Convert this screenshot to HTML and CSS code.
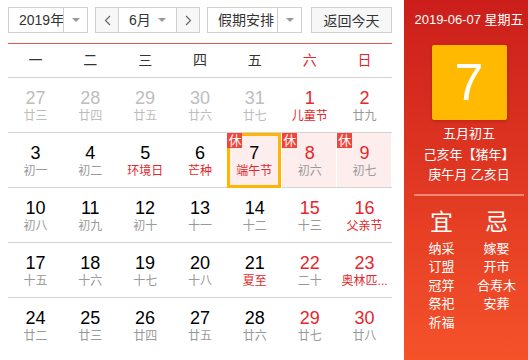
FILE: index.html
```html
<!DOCTYPE html>
<html lang="zh-CN">
<head>
<meta charset="UTF-8">
<meta name="viewport" content="width=device-width, initial-scale=1.0">
<title>万年历</title>
<link rel="stylesheet" href="styles.css">
</head>
<body>

<div class="calendar">
  <div class="main">
    <div class="toolbar">
      <div class="select year">
        <span class="select-text">2019年</span>
        <span class="select-arrow"><i class="caret"></i></span>
      </div>
      <div class="select month">
        <span class="btn-arrow">
          <svg width="7" height="11" viewBox="0 0 7 11"><path d="M6 1L1.5 5.5L6 10" fill="none" stroke="#666" stroke-width="1.2"/></svg>
        </span>
        <span class="select-text">6月</span>
        <span class="select-arrow inline"><i class="caret"></i></span>
        <span class="btn-arrow next">
          <svg width="7" height="11" viewBox="0 0 7 11"><path d="M1 1L5.5 5.5L1 10" fill="none" stroke="#666" stroke-width="1.2"/></svg>
        </span>
      </div>
      <div class="select holiday">
        <span class="select-text">假期安排</span>
        <span class="select-arrow"><i class="caret"></i></span>
      </div>
      <button class="btn-today">返回今天</button>
    </div>

    <div class="weekdays">
      <span>一</span><span>二</span><span>三</span><span>四</span><span>五</span>
      <span class="weekend">六</span><span class="weekend">日</span>
    </div>

    <div class="days">
      <div class="cell other"><b>27</b><small>廿三</small></div>
      <div class="cell other"><b>28</b><small>廿四</small></div>
      <div class="cell other"><b>29</b><small>廿五</small></div>
      <div class="cell other"><b>30</b><small>廿六</small></div>
      <div class="cell other"><b>31</b><small>廿七</small></div>
      <div class="cell weekend"><b>1</b><small class="fest">儿童节</small></div>
      <div class="cell weekend"><b>2</b><small>廿九</small></div>

      <div class="cell"><b>3</b><small>初一</small></div>
      <div class="cell"><b>4</b><small>初二</small></div>
      <div class="cell"><b>5</b><small class="fest">环境日</small></div>
      <div class="cell"><b>6</b><small class="fest">芒种</small></div>
      <div class="cell rest today"><span class="badge">休</span><b>7</b><small class="fest">端午节</small></div>
      <div class="cell rest weekend"><span class="badge">休</span><b>8</b><small>初六</small></div>
      <div class="cell rest weekend"><span class="badge">休</span><b>9</b><small>初七</small></div>

      <div class="cell"><b>10</b><small>初八</small></div>
      <div class="cell"><b>11</b><small>初九</small></div>
      <div class="cell"><b>12</b><small>初十</small></div>
      <div class="cell"><b>13</b><small>十一</small></div>
      <div class="cell"><b>14</b><small>十二</small></div>
      <div class="cell weekend"><b>15</b><small>十三</small></div>
      <div class="cell weekend"><b>16</b><small class="fest">父亲节</small></div>

      <div class="cell"><b>17</b><small>十五</small></div>
      <div class="cell"><b>18</b><small>十六</small></div>
      <div class="cell"><b>19</b><small>十七</small></div>
      <div class="cell"><b>20</b><small>十八</small></div>
      <div class="cell"><b>21</b><small class="fest">夏至</small></div>
      <div class="cell weekend"><b>22</b><small>二十</small></div>
      <div class="cell weekend"><b>23</b><small class="fest">奥林匹...</small></div>

      <div class="cell last"><b>24</b><small>廿二</small></div>
      <div class="cell last"><b>25</b><small>廿三</small></div>
      <div class="cell last"><b>26</b><small>廿四</small></div>
      <div class="cell last"><b>27</b><small>廿五</small></div>
      <div class="cell last"><b>28</b><small>廿六</small></div>
      <div class="cell last weekend"><b>29</b><small>廿七</small></div>
      <div class="cell last weekend"><b>30</b><small>廿八</small></div>
    </div>
  </div>

  <aside class="side">
    <div class="side-date">2019-06-07 星期五</div>
    <div class="side-day">7</div>
    <div class="side-lunar">
      <p>五月初五</p>
      <p>己亥年【猪年】</p>
      <p>庚午月 乙亥日</p>
    </div>
    <div class="side-line"></div>
    <div class="almanac">
      <div class="almanac-col">
        <h3>宜</h3>
        <p>纳采</p><p>订盟</p><p>冠笄</p><p>祭祀</p><p>祈福</p>
      </div>
      <div class="almanac-col">
        <h3>忌</h3>
        <p>嫁娶</p><p>开市</p><p>合寿木</p><p>安葬</p>
      </div>
    </div>
  </aside>
</div>

</body>
</html>
```

FILE: styles.css
```css
  body {
    margin: 0;
    font-family: "Liberation Sans", "Noto Sans CJK SC", sans-serif;
    color: #333;
    background: #fff;
  }
  .calendar {
    display: flex;
    width: 528px;
    height: 360px;
    overflow: hidden;
  }
  .main {
    width: 384px;
    margin: 0 12px 0 8px;
  }

  /* toolbar */
  .toolbar {
    display: flex;
    padding-top: 7px;
    margin-bottom: 10px;
    height: 26px;
  }
  .select {
    display: flex;
    box-sizing: border-box;
    height: 26px;
    border: 1px solid #d0d0d0;
    background: #fff;
    font-size: 14px;
    line-height: 24px;
    white-space: nowrap;
  }
  .select-text {
    flex: 1;
    min-width: 0;
    padding-left: 10px;
  }
  .select-arrow {
    flex: none;
    width: 23px;
    border-left: 1px solid #d0d0d0;
    display: flex;
    align-items: center;
    justify-content: center;
  }
  .select-arrow.inline {
    border-left: none;
    width: 20px;
    margin-right: 4px;
  }
  .caret {
    width: 0;
    height: 0;
    border-left: 4px solid transparent;
    border-right: 4px solid transparent;
    border-top: 4px solid #999;
  }
  .year {
    width: 80px;
    margin-right: 7px;
  }
  .month {
    width: 105px;
    margin-right: 7px;
  }
  .month .select-text {
    padding-left: 10px;
  }
  .btn-arrow {
    flex: none;
    width: 22px;
    background: #f7f7f7;
    border-right: 1px solid #d0d0d0;
    display: flex;
    align-items: center;
    justify-content: center;
  }
  .btn-arrow.next {
    border-right: none;
    border-left: 1px solid #d0d0d0;
  }
  .holiday {
    width: 95px;
    margin-right: 9px;
  }
  .btn-today {
    width: 81px;
    height: 26px;
    padding: 0;
    border: 1px solid #d0d0d0;
    background: #f7f7f7;
    font-family: inherit;
    font-size: 14px;
    color: #333;
  }

  /* week header */
  .weekdays {
    display: grid;
    grid-template-columns: repeat(7, 1fr);
    height: 33px;
    border-top: 1px solid #e8574c;
    border-bottom: 1px solid #d3d3d3;
    font-size: 14px;
    line-height: 33px;
    text-align: center;
  }
  .weekdays .weekend {
    color: #e5262b;
  }

  /* days */
  .days {
    display: grid;
    grid-template-columns: repeat(7, 1fr);
  }
  .cell {
    position: relative;
    box-sizing: border-box;
    height: 55px;
    padding-top: 10px;
    border-bottom: 1px solid #d3d3d3;
    text-align: center;
    min-width: 0;
  }
  .cell.last {
    border-bottom: none;
  }
  .cell b {
    display: block;
    font-weight: normal;
    font-size: 18px;
    line-height: 20px;
    color: #000;
  }
  .cell small {
    display: block;
    font-size: 12px;
    line-height: 17px;
    color: #999;
    white-space: nowrap;
  }
  .cell.other b,
  .cell.other small {
    color: #bdbdbd;
  }
  .cell.weekend b {
    color: #e5262b;
  }
  .cell small.fest {
    color: #e5262b;
  }
  .cell.rest {
    background: #fdeded;
    box-shadow: inset -1px 0 #fff;
  }
  .cell.today {
    border: 3px solid #fdb702;
    padding-top: 7px;
    box-shadow: none;
    margin-right: 1px;
  }
  .cell.today b {
    color: #000;
  }
  .badge {
    position: absolute;
    top: 0;
    left: 0;
    width: 15px;
    height: 15px;
    background: #f0453a;
    color: #fff;
    font-size: 13px;
    line-height: 15px;
    text-align: center;
  }
  .cell.today .badge {
    top: -3px;
    left: -3px;
  }

  /* side panel */
  .side {
    width: 124px;
    box-sizing: border-box;
    padding: 10px 4px 0 10px;
    background: linear-gradient(#cb1e1b, #f5522a);
    color: #fff;
    text-align: center;
  }
  .side-date {
    font-size: 13px;
    line-height: 20px;
  }
  .side-day {
    width: 75px;
    height: 75px;
    margin: 15px auto 0;
    background: #ffb900;
    border-radius: 2px;
    box-shadow: 0 1px 3px rgba(120, 20, 0, 0.35);
    font-size: 52px;
    line-height: 75px;
  }
  .side-lunar {
    margin-top: 4px;
    font-size: 13px;
    line-height: 20.5px;
  }
  .side-lunar p {
    margin: 0;
  }
  .side-line {
    height: 2px;
    margin-top: 8px;
    background: rgba(255, 255, 255, 0.4);
  }
  .almanac {
    display: flex;
    margin-top: 12px;
  }
  .almanac-col {
    flex: 1;
  }
  .almanac-col h3 {
    margin: 0 0 4px;
    font-weight: normal;
    font-size: 23px;
    line-height: 28px;
  }
  .almanac-col p {
    margin: 0;
    font-size: 13px;
    line-height: 18.5px;
  }
```
